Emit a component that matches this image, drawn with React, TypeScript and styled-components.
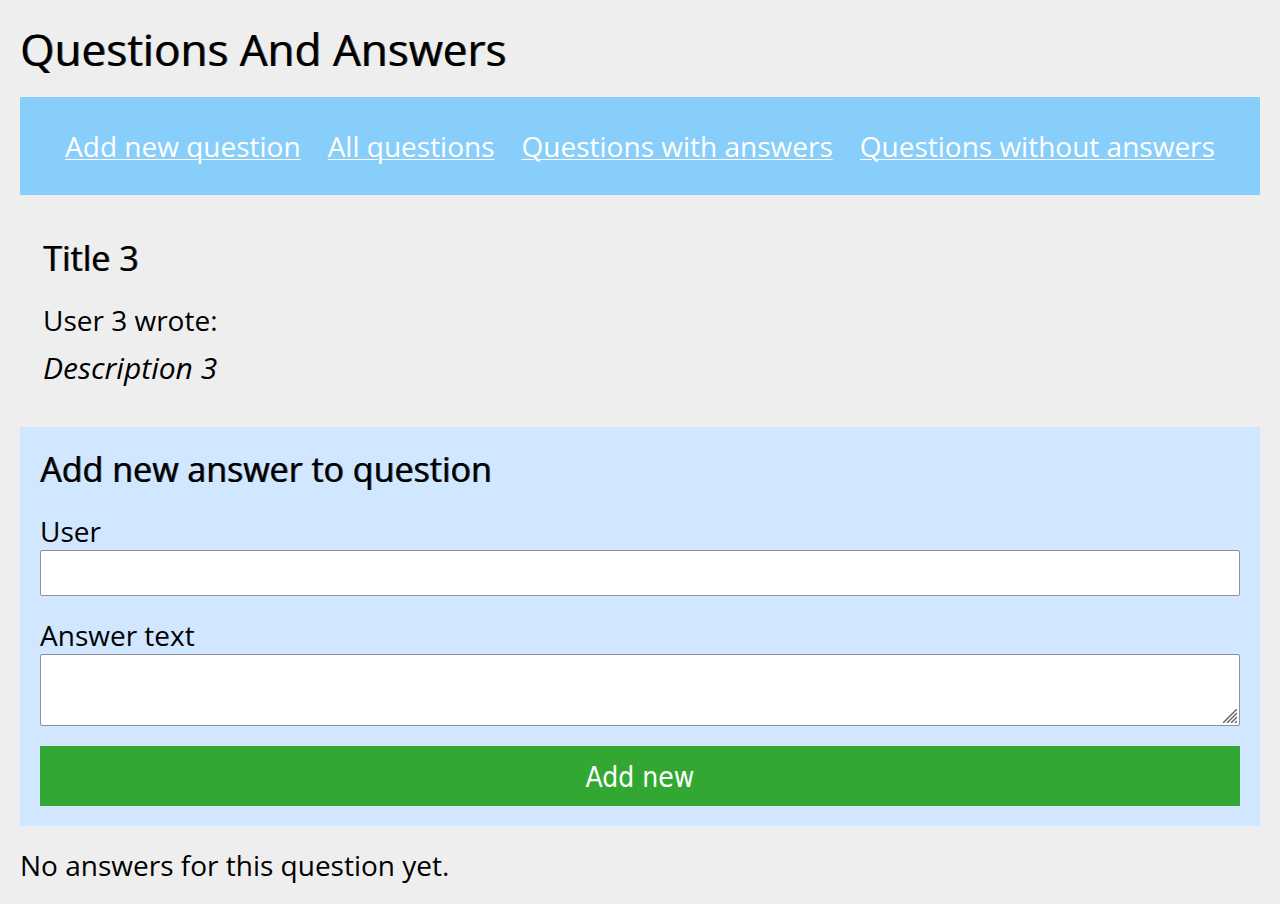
import React from 'react';
import styled, { createGlobalStyle } from 'styled-components';

const GlobalStyle = createGlobalStyle`
  * { box-sizing: border-box; }
  body {
    margin: 0;
    padding: 20px;
    background: #eeeeee;
    color: #000000;
    font-family: "Open Sans", "Noto Sans", sans-serif;
    font-size: 28px;
    line-height: 38px;
  }
`;

const PageTitle = styled.h1`
  margin: 0 0 19px;
  font-size: 44px;
  font-weight: 400;
  line-height: 58px;
  text-shadow: 1px 0 0 rgba(0, 0, 0, 0.7);
`;

const Nav = styled.nav`
  display: flex;
  flex-wrap: wrap;
  justify-content: center;
  gap: 27px;
  padding: 30px 20px;
  background: #87cefa;
`;

const NavLink = styled.a`
  color: #ffffff;
  text-decoration-thickness: 1px;
  text-underline-offset: 2px;
`;

const Question = styled.article`
  padding: 41px 23px 40px;
`;

const SectionTitle = styled.h2`
  margin: 0 0 20px;
  font-size: 34px;
  font-weight: 400;
  line-height: 45px;
  text-shadow: 1px 0 0 rgba(0, 0, 0, 0.7);
`;

const Author = styled.p`
  margin: 0 0 10px;
`;

const Description = styled.p`
  margin: 0;
  font-size: 30px;
  font-style: italic;
`;

const AnswerForm = styled.form`
  display: flex;
  flex-direction: column;
  padding: 20px;
  background: #d0e7ff;
`;

const Field = styled.div`
  display: flex;
  flex-direction: column;
  margin-bottom: 20px;
`;

const TextInput = styled.input`
  width: 100%;
  height: 46px;
  padding: 4px;
  border: 1px solid #8f8f9d;
  border-radius: 2px;
  background: #ffffff;
  font: inherit;
`;

const TextAreaFrame = styled.div`
  display: flex;
  position: relative;
`;

const TextArea = styled.textarea`
  width: 100%;
  height: 72px;
  padding: 4px;
  border: 1px solid #8f8f9d;
  border-radius: 2px;
  background: #ffffff;
  font: inherit;
  resize: vertical;

  &::-webkit-resizer {
    background: transparent;
  }
`;

const ResizeGrip = styled.svg`
  position: absolute;
  right: 3px;
  bottom: 3px;
  pointer-events: none;
`;

const SubmitButton = styled.button`
  height: 60px;
  padding: 2px 20px 0;
  border: 0;
  background: #32a832;
  color: #ffffff;
  font-family: "DejaVu Sans Condensed", sans-serif;
  font-size: 28px;
`;

const EmptyNote = styled.p`
  margin: 20px 0 0;
`;

const links = [
  'Add new question',
  'All questions',
  'Questions with answers',
  'Questions without answers',
];

export default function App() {
  return (
    <>
      <GlobalStyle />
      <PageTitle>Questions And Answers</PageTitle>
      <Nav>
        {links.map((label) => (
          <NavLink key={label} href="#">{label}</NavLink>
        ))}
      </Nav>
      <Question>
        <SectionTitle>Title 3</SectionTitle>
        <Author>User 3 wrote:</Author>
        <Description>Description 3</Description>
      </Question>
      <AnswerForm>
        <SectionTitle>Add new answer to question</SectionTitle>
        <Field>
          <label htmlFor="user">User</label>
          <TextInput id="user" type="text" />
        </Field>
        <Field>
          <label htmlFor="answer">Answer text</label>
          <TextAreaFrame>
            <TextArea id="answer" />
            <ResizeGrip width="14" height="14" viewBox="0 0 14 14" aria-hidden="true">
              <path d="M0 14L14 0M4 14L14 4M8 14L14 8M12 14L14 12" fill="none" stroke="#606060" strokeWidth="1.4" />
            </ResizeGrip>
          </TextAreaFrame>
        </Field>
        <SubmitButton type="button">Add new</SubmitButton>
      </AnswerForm>
      <EmptyNote>No answers for this question yet.</EmptyNote>
    </>
  );
}
